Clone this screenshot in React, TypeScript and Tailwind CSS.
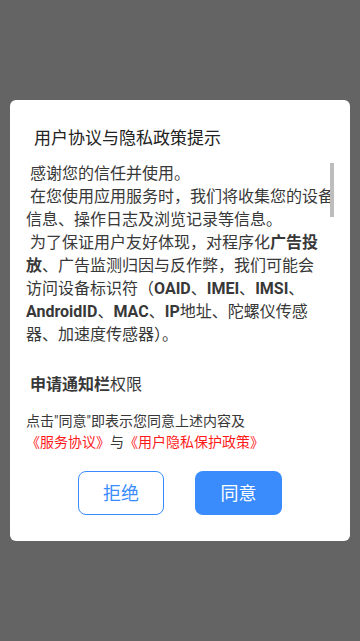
import React from 'react';

const font = { fontFamily: 'Roboto, "Noto Sans CJK SC", sans-serif' };

function Line({ children }: { children: React.ReactNode }) {
  return <div className="h-[23px] leading-[23px] whitespace-nowrap">{children}</div>;
}

export default function App() {
  return (
    <div className="w-[360px] h-[641px] bg-[#646464] pt-[100px] px-[10px]" style={font}>
      <div className="bg-white rounded-[6px] h-[441px] flex flex-col">
        <div className="pl-[24px] pt-[26px] h-[50px] text-[17px] leading-[24px] text-[#222]">
          用户协议与隐私政策提示
        </div>

        <div className="relative mx-[16px] mt-[12px] h-[240px] overflow-hidden text-[16px] text-[#383838]">
          <Line>{'\u00a0'}感谢您的信任并使用。</Line>
          <Line>{'\u00a0'}在您使用应用服务时，我们将收集您的设备</Line>
          <Line>信息、操作日志及浏览记录等信息。</Line>
          <Line>
            {'\u00a0'}为了保证用户友好体现，对程序化<b className="font-bold">广告投</b>
          </Line>
          <Line>
            <b className="font-bold">放</b>、广告监测归因与反作弊，我们可能会
          </Line>
          <Line>
            访问设备标识符（<b className="font-bold">OAID</b>、<b className="font-bold">IMEI</b>、<b className="font-bold">IMSI</b>、
          </Line>
          <Line>
            <b className="font-bold">AndroidID</b>、<b className="font-bold">MAC</b>、<b className="font-bold">IP</b>地址、陀螺仪传感
          </Line>
          <Line>器、加速度传感器）。</Line>
          <div className="mt-[27px]">
            <Line>
              {'\u00a0'}<b className="font-bold">申请通知栏</b>权限
            </Line>
          </div>
          <div className="absolute right-0 top-[1px] w-[4px] h-[54px] bg-[#bdbdbd]" />
        </div>

        <div className="pl-[16px] mt-[9px] text-[14px] leading-[21px] text-[#383838]">
          <div className="whitespace-nowrap">点击"同意"即表示您同意上述内容及</div>
          <div className="whitespace-nowrap">
            <span className="text-[#ff1a1a]">《服务协议》</span>与
            <span className="text-[#ff1a1a]">《用户隐私保护政策》</span>
          </div>
        </div>

        <div className="flex justify-center gap-[31px] mt-[18px]">
          <button className="w-[86px] h-[44px] rounded-[8px] border-[1.5px] border-[#3a8cfd] text-[#3a8cfd] text-[18px] bg-white">
            拒绝
          </button>
          <button className="w-[87px] h-[44px] rounded-[8px] bg-[#3a8cfd] text-white text-[18px]">
            同意
          </button>
        </div>
      </div>
    </div>
  );
}
